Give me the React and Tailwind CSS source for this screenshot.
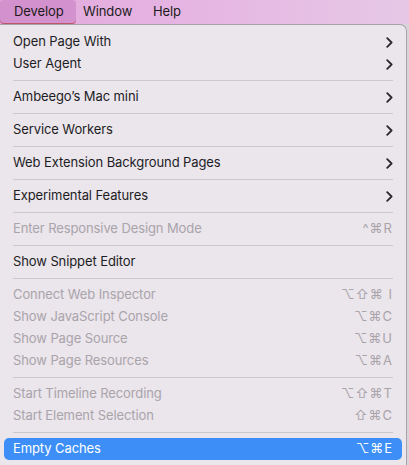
import React from "react";

const ChevronRight = () => (
  <svg width="7" height="11" viewBox="0 0 7 11" className="text-[#2a2a2a]">
    <path d="M1.2 1.2 L5.6 5.5 L1.2 9.8" fill="none" stroke="currentColor" strokeWidth="1.8" strokeLinecap="round" strokeLinejoin="round" />
  </svg>
);

const items = [
  { label: "Open Page With", sub: true },
  { label: "User Agent", sub: true },
  { sep: true },
  { label: "Ambeego\u2019s Mac mini", sub: true },
  { sep: true },
  { label: "Service Workers", sub: true },
  { sep: true },
  { label: "Web Extension Background Pages", sub: true },
  { sep: true },
  { label: "Experimental Features", sub: true },
  { sep: true },
  { label: "Enter Responsive Design Mode", keys: "^\u2318R", disabled: true },
  { sep: true },
  { label: "Show Snippet Editor" },
  { sep: true },
  { label: "Connect Web Inspector", keys: "\u2325\u21e7\u2318 I", disabled: true },
  { label: "Show JavaScript Console", keys: "\u2325\u2318C", disabled: true },
  { label: "Show Page Source", keys: "\u2325\u2318U", disabled: true },
  { label: "Show Page Resources", keys: "\u2325\u2318A", disabled: true },
  { sep: true },
  { label: "Start Timeline Recording", keys: "\u2325\u21e7\u2318T", disabled: true },
  { label: "Start Element Selection", keys: "\u21e7\u2318C", disabled: true },
  { sep: true },
  { label: "Empty Caches", keys: "\u2325\u2318E", active: true },
  { sep: true },
];

export default function App() {
  return (
    <div className="w-[409px] h-[465px] overflow-hidden bg-[#d9d4da] font-['Inter','Liberation_Sans',sans-serif] text-[13px] tracking-[-0.1px]">
      {/* menu bar */}
      <div className="h-[24px] flex items-stretch bg-gradient-to-r from-[#e2a9dc] via-[#e6b6e3] to-[#e6c8e6] text-[#1c1c1c] text-[13px]">
        <div className="w-[76px] pl-[14px] flex items-center bg-[#d391cd] rounded-[4px] shadow-[inset_0_-1px_0_#c0566a]">Develop</div>
        <div className="w-[77px] pl-[7px] flex items-center">Window</div>
        <div className="flex items-center">Help</div>
      </div>

      {/* dropdown */}
      <div className="w-[407px] h-[441px] bg-[#ebe5ec] border-t border-r border-[#a9a2ab] rounded-tr-[7px] pt-[6px]">
        {items.map((it, i) =>
          it.sep ? (
            <div key={i} className="h-[11px] flex items-center px-[13px]">
              <div className="h-px w-[381px] bg-[#cdc7ce]" />
            </div>
          ) : (
            <div
              key={i}
              className={`h-[22px] mx-[4px] pl-[9px] pr-[9px] flex items-center justify-between rounded-[5px] ${
                it.active ? "bg-[#3d8ff7] text-white" : it.disabled ? "text-[#a9a4aa]" : "text-[#1d1d1f]"
              }`}
            >
              <span>{it.label}</span>
              {it.sub && <ChevronRight />}
              {it.keys && <span className="tracking-[1px]">{it.keys}</span>}
            </div>
          )
        )}
      </div>
    </div>
  );
}
